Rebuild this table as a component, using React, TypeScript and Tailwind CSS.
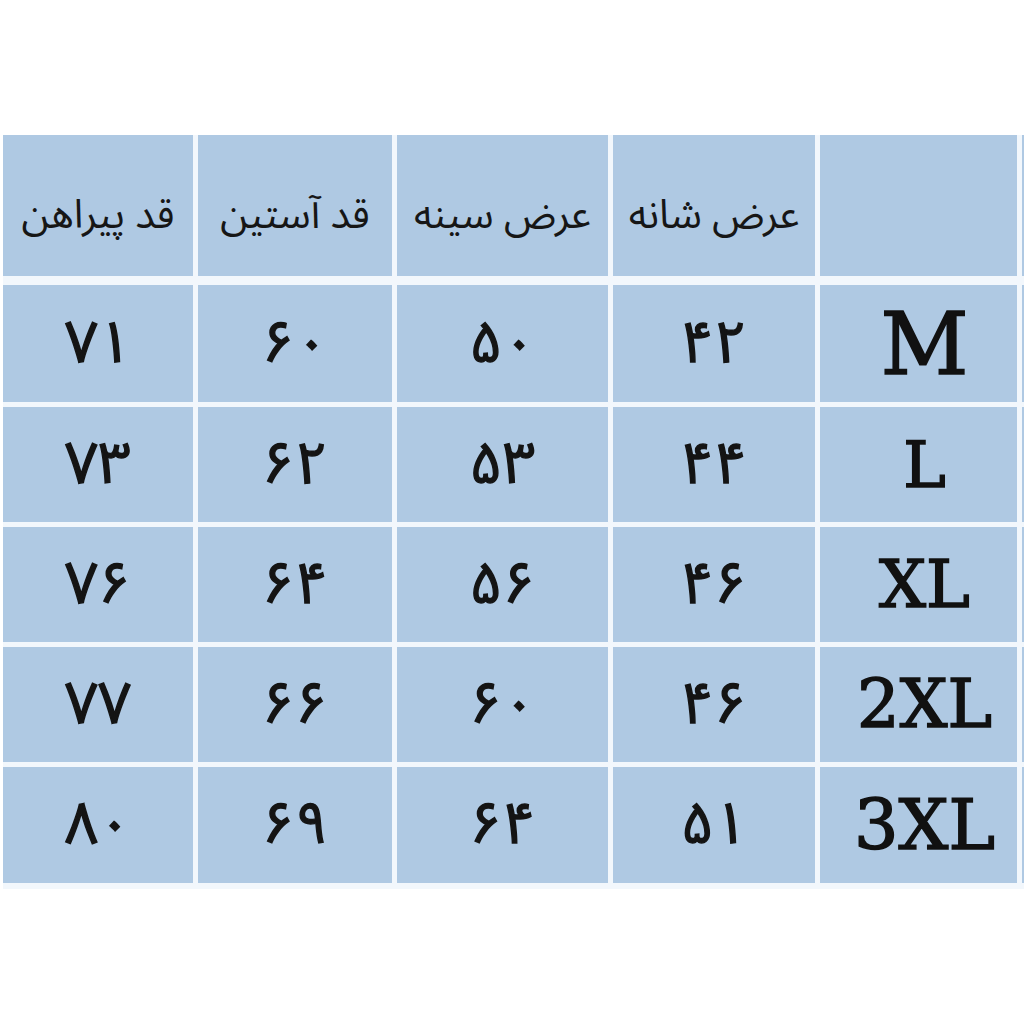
import React from "react";

const persian = { fontFamily: '"Noto Sans Arabic", "Vazirmatn", "DejaVu Sans", sans-serif' };
const serif = { fontFamily: '"DejaVu Serif", "Liberation Serif", serif' };

const headers = ["قد پیراهن", "قد آستین", "عرض سینه", "عرض شانه"];

const rows = [
  { size: "M", sizeCls: "text-[86px]", h: "h-[117px]", vals: ["۷۱", "۶۰", "۵۰", "۴۲"] },
  { size: "L", sizeCls: "text-[64px]", h: "h-[115px]", vals: ["۷۳", "۶۲", "۵۳", "۴۴"] },
  { size: "XL", sizeCls: "text-[66px]", h: "h-[115px]", vals: ["۷۶", "۶۴", "۵۶", "۴۶"] },
  { size: "2XL", sizeCls: "text-[67px]", h: "h-[115px]", vals: ["۷۷", "۶۶", "۶۰", "۴۶"] },
  { size: "3XL", sizeCls: "text-[70px]", h: "h-[116px]", vals: ["۸۰", "۶۹", "۶۴", "۵۱"] },
];

const cell = "bg-[#afc9e3] flex items-center justify-center";

export default function App() {
  return (
    <div className="w-[1024px] h-[1024px] bg-white overflow-hidden pt-[135px] pl-[3px]">
      <div className="bg-[#f2f7fc] w-[1060px] pb-[6px]">
        <div className="grid grid-cols-[190px_194px_211px_202px_197px_40px] gap-x-[5px] gap-y-[5px]">
          {/* header row */}
          {headers.map((t) => (
            <div key={t} className={`${cell} h-[141px] mb-[4px] pt-5`}>
              <span dir="rtl" style={persian} className="text-[40px] text-[#161616]">
                {t}
              </span>
            </div>
          ))}
          <div className={`${cell} h-[141px] mb-[4px]`} />
          <div className={`${cell} h-[141px] mb-[4px]`} />

          {rows.map((r) => (
            <React.Fragment key={r.size}>
              {r.vals.map((v, i) => (
                <div key={i} className={`${cell} ${r.h}`}>
                  <span
                    style={persian}
                    className="text-[58px] text-[#141414] leading-none [-webkit-text-stroke:1.4px_#141414]"
                  >
                    {v}
                  </span>
                </div>
              ))}
              <div className={`${cell} ${r.h} pl-3`}>
                <span
                  style={serif}
                  className={`${r.sizeCls} text-[#111] leading-none [-webkit-text-stroke:1.6px_#111]`}
                >
                  {r.size}
                </span>
              </div>
              <div className={`${cell} ${r.h}`} />
            </React.Fragment>
          ))}
        </div>
      </div>
    </div>
  );
}
